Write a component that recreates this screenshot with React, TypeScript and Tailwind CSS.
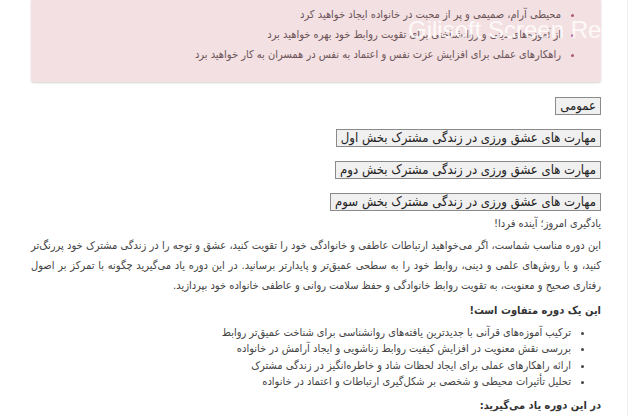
import React from 'react';

const highlights = [
  'محیطی آرام، صمیمی و پر از محبت در خانواده ایجاد خواهید کرد',
  'از آموزه‌های دینی و روانشناختی برای تقویت روابط خود بهره خواهید برد',
  'راهکارهای عملی برای افزایش عزت نفس و اعتماد به نفس در همسران به کار خواهید برد',
];

const sections = [
  'عمومی',
  'مهارت های عشق ورزی در زندگی مشترک بخش اول',
  'مهارت های عشق ورزی در زندگی مشترک بخش دوم',
  'مهارت های عشق ورزی در زندگی مشترک بخش سوم',
];

const features = [
  'ترکیب آموزه‌های قرآنی با جدیدترین یافته‌های روانشناسی برای شناخت عمیق‌تر روابط',
  'بررسی نقش معنویت در افزایش کیفیت روابط زناشویی و ایجاد آرامش در خانواده',
  'ارائه راهکارهای عملی برای ایجاد لحظات شاد و خاطره‌انگیز در زندگی مشترک',
  'تحلیل تأثیرات محیطی و شخصی بر شکل‌گیری ارتباطات و اعتماد در خانواده',
];

export default function App() {
  return (
    <div
      dir="rtl"
      className="relative flex h-[416px] w-[632px] overflow-hidden bg-white text-[#444]"
      style={{ fontFamily: '"DejaVu Sans Condensed", "DejaVu Sans", sans-serif' }}
    >
      <div className="w-[5px] border-l border-[#eeeeee]" />
      <div className="w-[26px]" />

      <div className="flex w-[570px] flex-col">
        <div className="rounded-b-[3px] bg-[#f3e0e2] pb-[17px] pt-[5px] shadow-[0_1px_2px_rgba(0,0,0,0.18)]">
          <ul className="list-disc pr-10 text-[11px] leading-[20px] text-[#6b5458] marker:text-[#b3587c]">
            {highlights.map((h) => (
              <li key={h}>{h}</li>
            ))}
          </ul>
        </div>

        <div className="mt-[15px] flex flex-col items-start gap-[14px]">
          {sections.map((s) => (
            <button
              key={s}
              className="h-[18px] border border-[#8a8a8a] bg-[#f0f0f0] px-[4px] text-[13px] leading-[16px] text-[#222]"
            >
              {s}
            </button>
          ))}
        </div>

        <p className="mt-[3px] text-[11px] leading-[20px]">یادگیری امروز؛ آینده فردا!</p>

        <p className="mt-[2px] text-justify text-[11px] leading-[20px]">
          این دوره مناسب شماست، اگر می‌خواهید ارتباطات عاطفی و خانوادگی خود را تقویت کنید، عشق و توجه را در زندگی مشترک خود پررنگ‌تر
          کنید، و با روش‌های علمی و دینی، روابط خود را به سطحی عمیق‌تر و پایدارتر برسانید. در این دوره یاد می‌گیرید چگونه با تمرکز بر اصول
          رفتاری صحیح و معنویت، به تقویت روابط خانوادگی و حفظ سلامت روانی و عاطفی خانواده خود بپردازید.
        </p>

        <p className="mt-[5px] text-[11px] font-bold leading-[20px] text-[#333]">این یک دوره متفاوت است!</p>

        <ul className="mt-[4px] list-disc pr-[30px] text-[11px] leading-[16.3px]">
          {features.map((f) => (
            <li key={f}>{f}</li>
          ))}
        </ul>

        <p className="mt-[6px] text-[11px] font-bold leading-[20px] text-[#333]">در این دوره یاد می‌گیرید:</p>
      </div>

      <div
        dir="ltr"
        className="pointer-events-none absolute left-[408px] top-[16px] whitespace-nowrap text-[24px] leading-[28px] text-white/80"
        style={{ fontFamily: '"Liberation Sans", sans-serif' }}
      >
        Gilisoft Screen Recorder
      </div>
    </div>
  );
}
